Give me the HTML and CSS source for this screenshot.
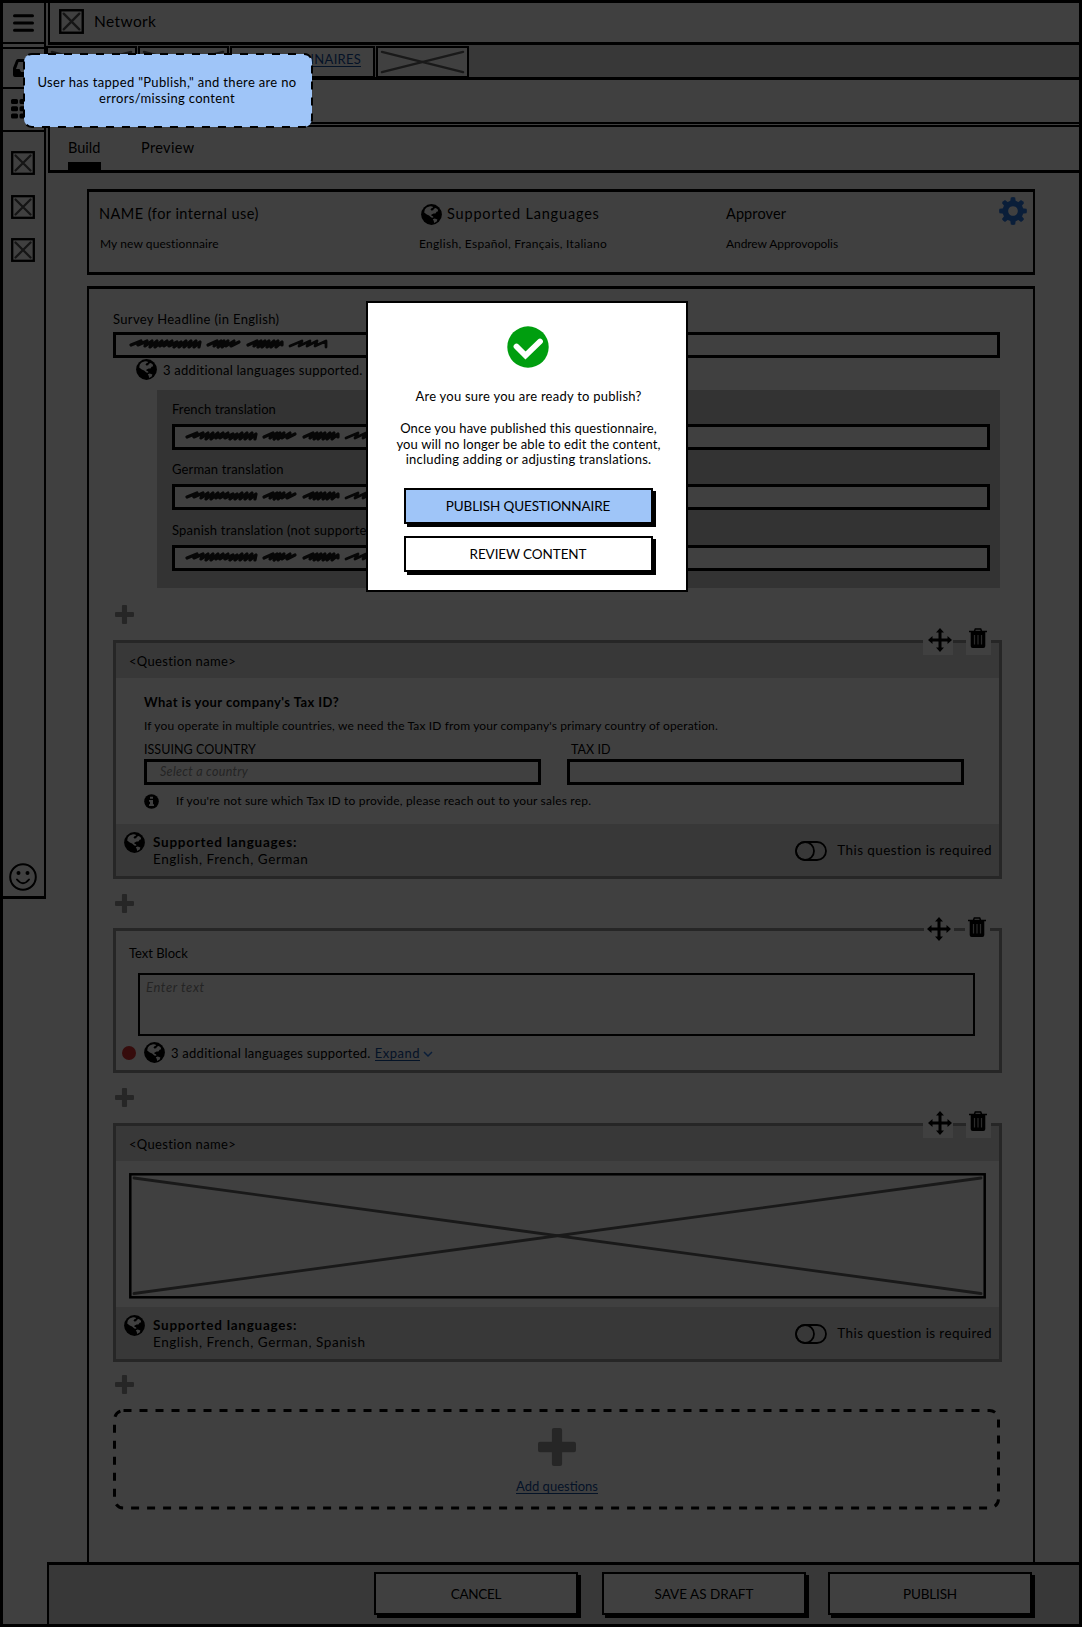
FILE: index.html
```html
<!DOCTYPE html>
<html lang="en">
<head>
<meta charset="utf-8">
<title>Network – Questionnaire builder</title>
<link rel="stylesheet" href="styles.css">
</head>
<body>
<svg class="defs" aria-hidden="true">
  <symbol id="globe" viewBox="0 0 21 21">
    <circle cx="10.5" cy="10.5" r="10.4" fill="#000"/>
    <path fill="#fff" d="M5.600 3.600 9 2.200l2.400.3.600 1.200-1.600.6-.9 1.500.900.800 1.800-.3.700-1.600 1.800-.8 1.900 1.400.6 2-1.600.5-1.200 1.600-1.800.1-2.300 1.300.3 1.200 1.500.2.200 1.600-2-.3-2.200-2.100-2.300-.9L3.200 8.600l.6-3z"/>
    <path fill="#fff" d="m11.800 15.200 1.900-.6 2.700.8-.7 2-2.600 1.500-.3-2z"/>
  </symbol>
  <symbol id="plus" viewBox="0 0 20 20">
    <path fill="#999" d="M8.300 0h3.400q1 0 1 1v6.300H19q1 0 1 1v3.400q0 1-1 1h-6.300V19q0 1-1 1H8.300q-1 0-1-1v-6.300H1q-1 0-1-1V8.300q0-1 1-1h6.300V1q0-1 1-1z"/>
  </symbol>
  <symbol id="xbox" viewBox="0 0 24 24">
    <rect x="1.200" y="1.200" width="21.600" height="21.600" fill="#fff" stroke="#000" stroke-width="2.300"/>
    <path d="M4.500 4.500l15 15M19.500 4.500l-15 15" stroke="#555" stroke-width="2.300" stroke-linecap="round"/>
  </symbol>
  <symbol id="move" viewBox="0 0 24 24">
    <path d="M12 0l4 4.500h-2.500v6h6V8L24 12l-4.500 4v-2.500h-6v6H16L12 24l-4-4.500h2.500v-6h-6V16L0 12l4.500-4v2.500h6v-6H8z"/>
  </symbol>
  <symbol id="trash" viewBox="0 0 18 20">
    <path d="M5.300 3.500 6.300 1h5.400l1 2.500M0 3.500h18" fill="none" stroke="#000" stroke-width="1.500"/>
    <path d="M1.700 3.500h14.600V18q0 2-2 2H3.700q-2 0-2-2z"/>
    <path d="M5.500 7v9.500M9 7v9.500M12.500 7v9.500" stroke="#aaa" stroke-width="1.200"/>
  </symbol>
  <symbol id="scribble" viewBox="0 0 200 12">
    <g fill="none" stroke="#1c1c1c" stroke-linecap="round" stroke-linejoin="round">
      <path stroke-width="3.200" d="M2 7 12 3 9 7l9-4-2 5 7-5-2 6 7-6-2 6 7-6-2 5 7-5-3 5 8-5-3 5 8-4-3 5 7-5-2 5 7-6-2 6 7-6-2 6 7-6-2 6 6-5-1 5"/>
      <path stroke-width="3.200" d="M79 7l9-4-3 5 7-5-3 6 6-6-2 6 6-6-2 5 8-5-3 5 8-4"/>
      <path stroke-width="3.200" d="M119 7l9-4-3 5 7-5-3 6 7-6-3 6 7-6-2 6 7-6-3 6 7-6-2 6 6-5 0 3"/>
      <path stroke-width="2.800" d="M161 8l12-5-3 5 11-5-3 5 10-5-2 5 11-5v6"/>
    </g>
  </symbol>
  <symbol id="toggle" viewBox="0 0 32 20">
    <rect x="1" y="1" width="30" height="18" rx="9" fill="none" stroke="#000" stroke-width="1.800"/>
    <circle cx="10" cy="10" r="9" fill="none" stroke="#000" stroke-width="1.800"/>
  </symbol>
</svg>

<div class="app">
  <nav class="sidebar">
    <div class="cell cell-menu">
      <svg width="21" height="18" viewBox="0 0 21 18"><path d="M1.500 1.700h18M1.500 9h18M1.500 16.300h18" stroke="#000" stroke-width="3" stroke-linecap="round"/></svg>
    </div>
    <div class="cell cell-inbox">
      <svg width="21" height="18" viewBox="0 0 21 18"><path fill-rule="evenodd" d="M5 0h11q1.500 0 2 1.500L21 9v7q0 2-2 2H2q-2 0-2-2V9l3-7.500Q3.500 0 5 0zM5.500 3 3 10h3.500l1.500 3h5l1.500-3H18l-2.500-7z"/></svg>
    </div>
    <div class="cell cell-grid">
      <svg width="24" height="20" viewBox="0 0 24 20"><path d="M1.500 0h4Q7 0 7 1.500v2Q7 5 5.500 5h-4Q0 5 0 3.500v-2Q0 0 1.500 0zm8.500 0h4q1.500 0 1.500 1.500v2Q15.500 5 14 5h-4Q8.500 5 8.500 3.500v-2Q8.500 0 10 0zM17 0h5v5h-5zM1.500 7.200h4Q7 7.200 7 8.700v2q0 1.500-1.500 1.500h-4Q0 12.200 0 10.700v-2q0-1.500 1.500-1.500zm8.500 0h4q1.500 0 1.500 1.500v2q0 1.500-1.500 1.500h-4q-1.500 0-1.500-1.500v-2q0-1.500 1.500-1.500zM17 7.200h5v5h-5zM1.500 14.400h4q1.500 0 1.500 1.500v2q0 1.500-1.500 1.500h-4Q0 19.400 0 17.900v-2q0-1.500 1.500-1.500zm8.500 0h4q1.500 0 1.500 1.500v2q0 1.500-1.500 1.500h-4q-1.500 0-1.500-1.500v-2q0-1.500 1.500-1.500zM17 14.400h5v5h-5z"/></svg>
    </div>
    <div class="side-icons">
      <svg width="24" height="24"><use href="#xbox"/></svg>
      <svg width="24" height="24"><use href="#xbox"/></svg>
      <svg width="24" height="24"><use href="#xbox"/></svg>
    </div>
    <svg class="smile" width="28" height="28" viewBox="0 0 28 28"><circle cx="14" cy="14" r="12.800" fill="none" stroke="#000" stroke-width="2"/><circle cx="9.500" cy="10" r="2"/><circle cx="18.500" cy="10" r="2"/><path d="M8 16.500q6 7.500 12 0" fill="none" stroke="#000" stroke-width="2" stroke-linecap="round"/></svg>
  </nav>

  <main class="main">
    <header class="topbar">
      <svg width="25" height="25"><use href="#xbox"/></svg>
      <span class="brand">Network</span>
    </header>
    <div class="tabstrip">
      <div class="tab"><svg viewBox="0 0 88 27" preserveAspectRatio="none"><path d="M3 3l82 21M85 3L3 24"/></svg></div>
      <div class="tab"><svg viewBox="0 0 88 27" preserveAspectRatio="none"><path d="M3 3l82 21M85 3L3 24"/></svg></div>
      <div class="tab tab-active"><a class="link">QUESTIONNAIRES</a></div>
      <div class="tab"><svg viewBox="0 0 88 27" preserveAspectRatio="none"><path d="M3 3l82 21M85 3L3 24"/></svg></div>
    </div>
    <div class="band"></div>
    <div class="views">
      <span class="view view-on">Build</span>
      <span class="view view-preview">Preview</span>
    </div>

    <section class="summary">
      <div>
        <h2 class="sum-head s-name">NAME (for internal use)</h2>
        <p class="sum-text s-mynew">My new questionnaire</p>
      </div>
      <div>
        <h2 class="sum-head s-langs"><svg width="21" height="21"><use href="#globe"/></svg>Supported Languages</h2>
        <p class="sum-text s-list">English, Español, Français, Italiano</p>
      </div>
      <div>
        <h2 class="sum-head s-appr">Approver</h2>
        <p class="sum-text s-andrew">Andrew Approvopolis</p>
      </div>
      <svg class="gear" width="28" height="28" viewBox="-14 -14 28 28">
        <g fill="#2b78e4">
          <path fill-rule="evenodd" d="M0-10.500a10.500 10.500 0 1 0 .01 0zM0-4.800a4.800 4.800 0 1 1-.01 0z"/>
          <path d="M-2.800-9l.6-4.500Q0-14.300 2.200-13.500L2.800-9z"/>
          <path transform="rotate(45)" d="M-2.800-9l.6-4.500Q0-14.300 2.200-13.500L2.800-9z"/>
          <path transform="rotate(90)" d="M-2.800-9l.6-4.500Q0-14.300 2.200-13.500L2.800-9z"/>
          <path transform="rotate(135)" d="M-2.800-9l.6-4.500Q0-14.300 2.200-13.500L2.800-9z"/>
          <path transform="rotate(180)" d="M-2.800-9l.6-4.500Q0-14.300 2.200-13.500L2.800-9z"/>
          <path transform="rotate(225)" d="M-2.800-9l.6-4.500Q0-14.300 2.200-13.500L2.800-9z"/>
          <path transform="rotate(270)" d="M-2.800-9l.6-4.500Q0-14.300 2.200-13.500L2.800-9z"/>
          <path transform="rotate(315)" d="M-2.800-9l.6-4.500Q0-14.300 2.200-13.500L2.800-9z"/>
        </g>
      </svg>
    </section>

    <section class="builder">
      <label class="label headline-label">Survey Headline (in English)</label>
      <div class="input headline-input"><svg width="200" height="12"><use href="#scribble"/></svg></div>
      <div class="hint headline-hint"><svg width="21" height="21"><use href="#globe"/></svg><span class="extra">3 additional languages supported.</span></div>

      <div class="translations">
        <label class="label tr-fr">French translation</label>
        <div class="input"><svg width="200" height="12"><use href="#scribble"/></svg></div>
        <label class="label tr-de">German translation</label>
        <div class="input"><svg width="200" height="12"><use href="#scribble"/></svg></div>
        <label class="label tr-es">Spanish translation (not supported)</label>
        <div class="input"><svg width="200" height="12"><use href="#scribble"/></svg></div>
      </div>

      <svg class="add add-1" width="19" height="19"><use href="#plus"/></svg>

      <article class="card card-q">
        <div class="tools"><span class="tool tool-move"><svg width="24" height="24"><use href="#move"/></svg></span><span class="tool tool-trash"><svg width="18" height="20"><use href="#trash"/></svg></span></div>
        <div class="card-head">&lt;Question name&gt;</div>
        <div class="card-body q-body">
          <h3 class="q-title">What is your company's Tax ID?</h3>
          <p class="q-desc">If you operate in multiple countries, we need the Tax ID from your company's primary country of operation.</p>
          <div class="fields">
            <div><label class="field-label">ISSUING COUNTRY</label><div class="input placeholder select">Select a country</div></div>
            <div><label class="field-label taxid">TAX ID</label><div class="input"></div></div>
          </div>
          <p class="info"><svg width="15" height="15" viewBox="0 0 15 15"><circle cx="7.500" cy="7.500" r="7.300"/><path fill="#fff" d="M6 2.700h3v2.100H6zM5 6h4v4.300h1V12H5v-1.700h1V7.700H5z"/></svg>If you're not sure which Tax ID to provide, please reach out to your sales rep.</p>
        </div>
        <div class="card-foot">
          <svg width="21" height="21"><use href="#globe"/></svg>
          <div class="langs"><b>Supported languages:</b><span>English, French, German</span></div>
          <div class="required"><svg width="32" height="20"><use href="#toggle"/></svg>This question is required</div>
        </div>
      </article>

      <svg class="add add-2" width="19" height="19"><use href="#plus"/></svg>

      <article class="card card-text">
        <div class="tools tools-plain"><span class="tool tool-move"><svg width="24" height="24"><use href="#move"/></svg></span><span class="tool tool-trash"><svg width="18" height="20"><use href="#trash"/></svg></span></div>
        <label class="label block-label">Text Block</label>
        <div class="textarea placeholder">Enter text</div>
        <div class="hint block-hint"><i class="dot"></i><svg width="21" height="21"><use href="#globe"/></svg><span class="extra">3 additional languages supported.</span><a class="link expand">Expand</a><svg class="chev" width="10" height="6" viewBox="0 0 10 6"><path d="M1 1l4 4 4-4" fill="none" stroke="#2b78e4" stroke-width="1.500"/></svg></div>
      </article>

      <svg class="add add-3" width="19" height="19"><use href="#plus"/></svg>

      <article class="card card-q">
        <div class="tools"><span class="tool tool-move"><svg width="24" height="24"><use href="#move"/></svg></span><span class="tool tool-trash"><svg width="18" height="20"><use href="#trash"/></svg></span></div>
        <div class="card-head">&lt;Question name&gt;</div>
        <div class="card-body img-body">
          <svg width="857" height="126" viewBox="0 0 857 126"><rect x="1.300" y="1.300" width="854.400" height="123" fill="none" stroke="#000" stroke-width="2.500"/><path d="M5 5l847 115.500M852 5L5 120.500" stroke="#666" stroke-width="2.800" stroke-linecap="round"/></svg>
        </div>
        <div class="card-foot">
          <svg width="21" height="21"><use href="#globe"/></svg>
          <div class="langs"><b>Supported languages:</b><span>English, French, German, Spanish</span></div>
          <div class="required"><svg width="32" height="20"><use href="#toggle"/></svg>This question is required</div>
        </div>
      </article>

      <svg class="add add-4" width="19" height="19"><use href="#plus"/></svg>

      <div class="dropzone">
        <svg class="outline" width="888" height="101"><rect x="1.500" y="1.500" width="884" height="97.500" rx="9" fill="none" stroke="#000" stroke-width="3" stroke-dasharray="8 8"/></svg>
        <svg width="38" height="38"><use href="#plus"/></svg>
        <a class="link">Add questions</a>
      </div>
    </section>

    <footer class="actions">
      <button class="btn b-cancel">CANCEL</button>
      <button class="btn b-save">SAVE AS DRAFT</button>
      <button class="btn b-publish">PUBLISH</button>
    </footer>
  </main>

  <div class="backdrop"></div>

  <aside class="note">
    <svg class="outline" width="290" height="75"><rect x="1" y="1" width="288" height="73" rx="8" fill="#9fc5f8" stroke="#000" stroke-width="2" stroke-dasharray="8 8"/></svg>
    <p>User has tapped "Publish," and there are no<br>errors/missing content</p>
  </aside>

  <div class="modal">
    <svg width="42" height="42" viewBox="0 0 42 42"><circle cx="21" cy="21" r="20.700" fill="#009e0f"/><path d="M9.500 20.500l9 9L33 15.500" fill="none" stroke="#fff" stroke-width="5.800" stroke-linejoin="miter" stroke-linecap="round"/></svg>
    <p class="m-ask">Are you sure you are ready to publish?</p>
    <p class="m-body">Once you have published this questionnaire,<br>you will no longer be able to edit the content,<br><span class="m-last">including adding or adjusting translations.</span></p>
    <button class="btn primary">PUBLISH QUESTIONNAIRE</button>
    <button class="btn review">REVIEW CONTENT</button>
  </div>
</div>
</body>
</html>
```
FILE: styles.css
```css
* { box-sizing: border-box; margin: 0; padding: 0; }
body { font: 13px/16px Lato, "Open Sans", sans-serif; color: #000; background: #fff; }
svg { display: block; flex: none; }
.defs { position: absolute; width: 0; height: 0; }

.app { position: relative; width: 1082px; height: 1627px; display: flex; border: 3px solid #000; background: #fff; overflow: hidden; }

/* Sidebar */
.sidebar { width: 43px; height: 896px; border-right: 2px solid #000; border-bottom: 3px solid #000; display: flex; flex-direction: column; flex: none; }
.cell { display: flex; justify-content: center; align-items: center; border-bottom: 2px solid #000; }
.cell-menu { height: 41px; }
.cell-inbox { height: 42px; margin-top: 3px; border-top: 2px solid #000; padding-bottom: 1px; }
.cell-grid { height: 43px; padding: 0 1px 1px 0; }
.side-icons { display: flex; flex-direction: column; align-items: center; gap: 19.500px; padding: 19px 1px 0 0; }
.smile { margin: auto 0 5px 6px; }

.main { flex: 1; display: flex; flex-direction: column; min-width: 0; }
.topbar { height: 42px; margin-left: 2px; border-left: 2px solid #000; border-bottom: 3px solid #000; padding: 0 0 3px 9px; display: flex; align-items: center; gap: 10px; }
.brand { font-size: 15.5px; letter-spacing: .39px; }

.tabstrip { height: 32px; background: #e0e0e0; display: flex; gap: 1px; }
.tab { width: 91px; height: 32px; background: #fff; border: 2px solid #000; margin-top: 1px; padding: 1px; }
.tab:last-child { width: 93px; }
.tab svg { width: 100%; height: 100%; }
.tab path { stroke: #666; stroke-width: 2.5; stroke-linecap: round; }
.tab-active { width: 145px; display: flex; justify-content: center; padding: 3px 0 0 2px; letter-spacing: .29px; }
.link { color: #134c9c; border-bottom: 1px solid #134c9c; height: 16px; line-height: 16px; }

.band { height: 47px; margin-left: 2px; background: #fff; border-left: 2px solid #000; border-top: 3px solid #000; border-bottom: 2px solid #000; }
.views { height: 48px; margin: 1px 0 0 2px; border-left: 2px solid #000; border-top: 2px solid #000; border-bottom: 3px solid #000; display: flex; padding-left: 18px; gap: 40px; font-size: 14.5px; }
.view { padding-top: 12px; height: 43px; line-height: 18px; }
.view-on { width: 33px; border-bottom: 8px solid #000; }
.view-preview { letter-spacing: .34px; }

/* Summary card */
.summary { height: 86px; width: 948px; margin: 16px 0 0 41px; border: 3px solid #000; border-width: 3px 2.500px; display: grid; grid-template-columns: 320px 307px 1fr 28px; padding: 5px 6px 0 10px; }
.sum-head { font-weight: 400; font-size: 14.5px; line-height: 20px; padding-top: 7px; display: flex; align-items: center; gap: 5px; height: 27px; }
.sum-text { font-size: 12px; margin: 12px 0 0 1px; }
.s-name { letter-spacing: .46px; }
.s-langs { letter-spacing: .82px; }
.s-langs svg { margin-left: 2px; }
.s-appr { letter-spacing: .1px; }
.s-mynew { letter-spacing: .09px; }
.s-list { letter-spacing: .3px; margin-left: 0; }
.s-andrew { letter-spacing: -.07px; margin-left: 0; }

/* Builder */
.builder { width: 948px; height: 1276px; margin: 11px 0 0 41px; border: 3px solid #000; border-width: 3px 2.500px 0; padding: 22px 30px 0 24px; display: flex; flex-direction: column; align-items: flex-start; flex: none; }
.label { display: block; }
.headline-label { letter-spacing: .35px; }
.input { border: 3px solid #000; height: 26px; background: #fff; width: 100%; }
.input svg { margin: 3px 0 0 10px; }
.headline-input { width: 887px; margin-top: 5px; }
.headline-input svg { margin-left: 13px; }
.hint { display: flex; align-items: center; gap: 6px; height: 21px; }
.headline-hint { margin: 1px 0 0 23px; }
.extra { letter-spacing: .25px; }

.translations { width: 843px; height: 198px; margin: 10px 0 0 44px; background: #ccc; padding: 11px 10px 0 15px; }
.translations .input { margin-top: 7px; }
.tr-fr { letter-spacing: .07px; }
.tr-de { letter-spacing: .13px; margin-top: 11px; }
.tr-es { letter-spacing: .2px; margin-top: 12px; }

.add { margin-left: 2px; }
.add-1 { margin-top: 17px; }
.add-2 { margin-top: 15px; }
.add-3 { margin-top: 15px; }
.add-4 { margin-top: 13px; }

.card { position: relative; width: 889px; border: 3px solid #999; flex: none; }
.card-q { height: 239px; margin-top: 16px; }
.card-head { height: 35px; background: #e0e0e0; padding: 10px 0 0 13px; letter-spacing: .33px; }
.card-body { height: 146px; }
.card-foot { height: 52px; background: #e0e0e0; display: flex; padding: 8px 7px 0 8px; font-size: 13.5px; line-height: 17px; }
.langs { display: flex; flex-direction: column; margin: 2px 0 0 8px; letter-spacing: .56px; }
.langs b { letter-spacing: .75px; }
.required { margin-left: auto; height: 37px; display: flex; align-items: center; gap: 10px; letter-spacing: .4px; }

/* Move / delete handles straddle the card's top border */
.tools { position: absolute; top: -16px; right: 8px; display: flex; gap: 13px; }
.tool { height: 28px; background: #fff; }
.tool-move { width: 30px; padding: 1px 0 0 5px; }
.tool-trash { width: 25px; padding: 1px 0 0 3px; }
.tools-plain { top: -14px; right: 9px; gap: 11px; }
.tools-plain .tool-move { padding: 0 0 0 3px; }
.tools-plain .tool-trash { padding-top: 0; }

.q-body { padding: 16px 34px 0 28px; }
.q-title { font-size: 13px; letter-spacing: .42px; }
.q-desc { font-size: 12px; letter-spacing: .135px; margin-top: 8px; }
.fields { display: grid; grid-template-columns: 397px 397px; gap: 26px; margin-top: 8px; }
.field-label { display: block; font-size: 12.5px; margin-bottom: 1px; letter-spacing: .04px; }
.taxid { margin-left: 4px; }
.placeholder { color: #909090; font-style: italic; }
.select { padding: 2px 0 0 13px; font-size: 12.5px; letter-spacing: .3px; }
.info { display: flex; align-items: center; gap: 17px; font-size: 12px; letter-spacing: .195px; margin-top: 8px; }

.card-text { height: 145px; margin-top: 15px; }
.block-label { margin: 14px 0 0 13px; }
.textarea { width: 837px; height: 63px; margin: 12px 0 0 22px; border: 2.500px solid #000; padding: 4px 0 0 6px; letter-spacing: .6px; background: #fff; }
.block-hint { margin: 6px 0 0 6px; }
.dot { width: 14px; height: 14px; border-radius: 50%; background: #d83030; margin-right: 2px; }
.expand { margin-left: -2px; letter-spacing: .5px; }
.chev { margin: 3px 0 0 -3px; }

.img-body { padding: 12px 0 0 13px; }

.dropzone { position: relative; width: 888px; height: 101px; margin-top: 15px; display: flex; flex-direction: column; align-items: center; padding-top: 19px; gap: 12px; flex: none; }
.outline { position: absolute; inset: 0; }

/* Footer */
.actions { height: 62px; flex: none; margin-left: 1px; background: #e0e0e0; border-left: 2px solid #000; border-top: 3px solid #000; display: flex; justify-content: flex-end; gap: 24px; padding: 7px 47px 0 0; position: relative; }
.btn { font: 13.5px/16px Lato, "Open Sans", sans-serif; color: #000; background: #fff; border: 2px solid #000; box-shadow: 3px 3px 0 #000; }
.actions .btn { width: 204px; height: 43px; }
.actions .b-save { margin-right: -2px; }
.b-cancel { letter-spacing: -.3px; }
.b-publish { letter-spacing: -.18px; }

.backdrop { position: absolute; inset: -3px; background: rgba(0, 0, 0, .75); }

/* Annotation */
.note { position: absolute; left: 20px; top: 50px; width: 290px; height: 75px; text-align: center; padding-top: 21px; letter-spacing: .33px; }
.note p { position: relative; left: -1px; }

/* Dialog */
.modal { position: absolute; left: 363px; top: 298px; width: 322px; height: 291px; background: #fff; border: 2.500px solid #000; display: flex; flex-direction: column; align-items: center; padding: 23px 0 0 1px; text-align: center; }
.m-ask { letter-spacing: .24px; margin: 20px 0 0 2px; }
.m-body { line-height: 15.600px; letter-spacing: .13px; margin: 17px 0 0 2px; }
.m-last { letter-spacing: .24px; }
.modal .btn { width: 249px; height: 36px; margin: 20px 0 0 1px; letter-spacing: -.11px; }
.modal .primary { background: #9fc5f8; }
.modal .review { margin-top: 12px; letter-spacing: -.09px; }
```
